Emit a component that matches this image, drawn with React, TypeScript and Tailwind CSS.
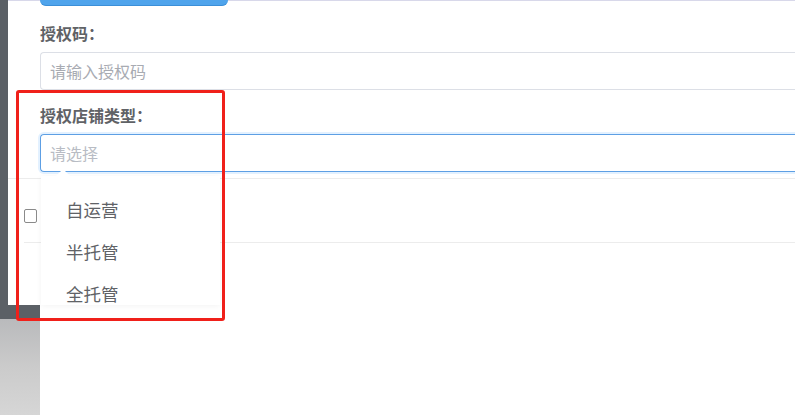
const options = ["自运营", "半托管", "全托管"]

function Dropdown() {
    return (
        <div className="absolute left-[41px] top-[176px] w-[179px] h-[129px] bg-white shadow-[0_1px_6px_rgba(0,0,0,0.05)] pt-[13px]">
            <div className="absolute left-[17px] -top-[5px] w-[10px] h-[10px] rotate-45 bg-white" />
            {options.map((o) => (
                <div key={o} className="h-[42px] flex items-center pl-[25px] text-[17.5px] text-[#606266]">
                    {o}
                </div>
            ))}
        </div>
    )
}

export default function App() {
    return (
        <div
            className="relative w-[795px] h-[415px] overflow-hidden bg-white grid grid-rows-[305px_1fr]"
            style={{ fontFamily: '"Noto Sans CJK SC", "Noto Sans", sans-serif' }}
        >
            {/* modal */}
            <div className="flex">
                <div className="w-[8px] bg-[#5b6066]" />
                <div className="flex-1 flex flex-col border-t border-[#d8d8ea] pl-[32px] bg-white">
                    <div className="w-[188px] h-[6px] -mt-px rounded-b-[8px] bg-[#4fa4ec] border-b border-[#3b8fd8]" />
                    <label className="mt-[16px] h-[22px] leading-[22px] text-[16px] font-bold text-[#606266]">授权码：</label>
                    <div className="mt-[8px] h-[38px] flex items-center pl-[9px] border-y border-l border-[#dcdfe6] rounded-l-[4px] text-[16px] text-[#a8abb2]">
                        请输入授权码
                    </div>
                    <label className="mt-[14px] h-[22px] leading-[22px] text-[16px] font-bold text-[#606266]">授权店铺类型：</label>
                    <div className="mt-[8px] h-[38px] flex items-center pl-[9px] border-y border-l border-[#5d9fe4] rounded-l-[4px] text-[16px] text-[#b8bcc4] shadow-[0_0_0_2px_#e3f1ff]">
                        请选择
                    </div>
                    <div className="-ml-[32px] mt-[6px] h-[12px] border-t border-[#ececec]" />
                    <div className="-ml-[16px] flex items-center h-[53px] border-b border-[#ececec]">
                        <span className="w-[13px] h-[14px] border border-[#8a8a8a] rounded-[2px] bg-white" />
                    </div>
                </div>
            </div>
            {/* page behind */}
            <div className="flex">
                <div className="w-[40px] flex flex-col">
                    <div className="h-[14px] bg-[#5b6066]" />
                    <div className="flex-1 bg-gradient-to-b from-[#b9babc] via-[#cbcbcb] to-[#d6d6d6]" />
                </div>
                <div className="flex-1 bg-white" />
            </div>
            <Dropdown />
            <div className="absolute left-[16px] top-[90px] w-[209px] h-[231px] border-[3px] border-[#f0201a] rounded-[3px]" />
        </div>
    )
}
